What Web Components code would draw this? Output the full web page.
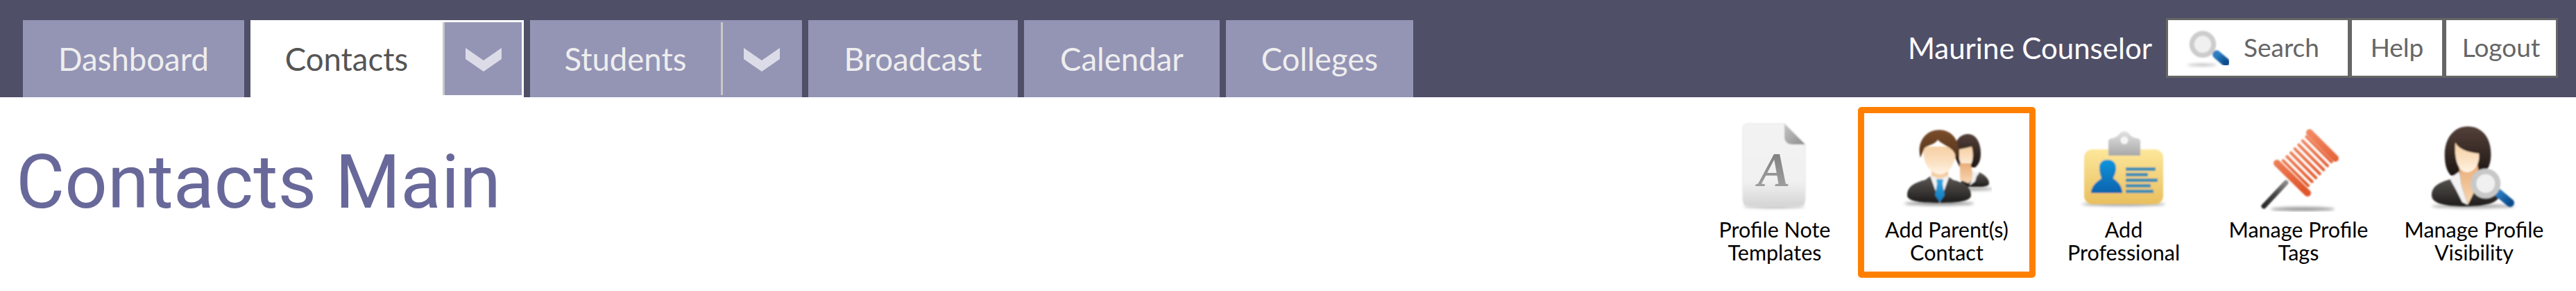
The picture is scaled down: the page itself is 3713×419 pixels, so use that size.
<!DOCTYPE html>
<html>
<head>
<meta charset="utf-8">
<title>Contacts Main</title>
<style>
  html, body { margin: 0; padding: 0; background: #fff; }
  body { font-family: "Lato", "Liberation Sans", sans-serif; }
</style>
</head>
<body>
<app-shell>
  <app-header slot="header">
    <nav-tab slot="tabs" style="--w:319px">Dashboard</nav-tab>
    <nav-tab slot="tabs" style="--w:277px" active menu>Contacts</nav-tab>
    <nav-tab slot="tabs" style="--w:275px" menu>Students</nav-tab>
    <nav-tab slot="tabs" style="--w:302px">Broadcast</nav-tab>
    <nav-tab slot="tabs" style="--w:282px">Calendar</nav-tab>
    <nav-tab slot="tabs" style="--w:270px">Colleges</nav-tab>
    <span slot="user">Maurine Counselor</span>
    <tool-button slot="tools" style="--w:265px" wide><app-icon slot="icon" name="search" size="65"></app-icon>Search</tool-button>
    <tool-button slot="tools" style="--w:136px">Help</tool-button>
    <tool-button slot="tools" style="--w:164px">Logout</tool-button>
  </app-header>
  <page-title slot="title">Contacts Main</page-title>
  <action-link slot="actions" style="--w:240px"><app-icon slot="icon" name="note"></app-icon>Profile Note<br>Templates</action-link>
  <action-link slot="actions" active style="--w:256px"><app-icon slot="icon" name="parents"></app-icon>Add Parent(s)<br>Contact</action-link>
  <action-link slot="actions" style="--w:254px"><app-icon slot="icon" name="badge"></app-icon>Add<br>Professional</action-link>
  <action-link slot="actions" style="--w:250px"><app-icon slot="icon" name="pin"></app-icon>Manage Profile<br>Tags</action-link>
  <action-link slot="actions" style="--w:256px"><app-icon slot="icon" name="visibility"></app-icon>Manage Profile<br>Visibility</action-link>
</app-shell>

<script>
// Page frame
class AppShell extends HTMLElement {
  constructor() {
    super();
    this.attachShadow({ mode: 'open' });
    this.shadowRoot.innerHTML = `
      <style>
        :host { display: block; }
        .main {
          display: flex;
          justify-content: space-between;
          align-items: flex-start;
          padding: 14px 19px 0 0;
        }
        .actions { display: flex; }
      </style>
      <slot name="header"></slot>
      <div class="main">
        <slot name="title"></slot>
        <div class="actions"><slot name="actions"></slot></div>
      </div>
    `;
  }
}

class AppHeader extends HTMLElement {
  constructor() {
    super();
    this.attachShadow({ mode: 'open' });
    this.shadowRoot.innerHTML = `
      <style>
        :host {
          display: flex;
          justify-content: space-between;
          height: 140px;
          background: #4f4f68;
          padding: 0 26px 0 33px;
          box-sizing: border-box;
        }
        .tabs { display: flex; gap: 9px; padding-top: 29px; }
        .right { display: flex; align-items: flex-start; padding-top: 26px; }
        .user {
          color: #fff;
          font-size: 42px;
          line-height: 86px;
          margin-right: 20px;
        }
        .tools { display: flex; }
      </style>
      <div class="tabs"><slot name="tabs"></slot></div>
      <div class="right">
        <div class="user"><slot name="user"></slot></div>
        <div class="tools"><slot name="tools"></slot></div>
      </div>
    `;
  }
}

// Top nav tab, with optional dropdown part
class NavTab extends HTMLElement {
  constructor() {
    super();
    this.attachShadow({ mode: 'open' });
  }

  connectedCallback() {
    this.shadowRoot.innerHTML = `
      <style>
        :host {
          display: flex;
          height: 111px;
          background: #9494b5;
          color: #eeeeee;
          font-size: 45.5px;
        }
        :host([active]) { background: #fff; color: #555; }
        .label {
          display: flex;
          align-items: center;
          justify-content: center;
          width: var(--w);
          padding-bottom: 1px;
        }
        .menu {
          display: flex;
          align-items: center;
          justify-content: center;
          width: 111px;
          height: 105px;
          margin: 3px 3px 3px 0;
          background: #9494b5;
          border-left: 3px solid #c8c8c8;
        }
        svg { display: block; filter: blur(0.7px); margin-top: 1px; }
      </style>
      <div class="label"><slot></slot></div>
      ${this.hasAttribute('menu') ? `
        <div class="menu">
          <svg width="52" height="35" viewBox="0 0 52 35">
            <path d="M0 1 L26 19 L52 1 L52 17 L26 35 L0 17 Z" fill="#dcdce8"/>
          </svg>
        </div>` : ''}
    `;
  }
}

class ToolButton extends HTMLElement {
  constructor() {
    super();
    this.attachShadow({ mode: 'open' });
    this.shadowRoot.innerHTML = `
      <style>
        :host {
          display: flex;
          align-items: center;
          justify-content: center;
          width: var(--w);
          height: 86px;
          box-sizing: border-box;
          border: 3px solid #666;
          background: #fff;
          color: #666;
          font-size: 37px;
          padding-bottom: 4px;
        }
        :host([wide]) { justify-content: flex-start; padding-left: 25px; }
        ::slotted(app-icon) { margin-right: 19px; }
      </style>
      <slot name="icon"></slot>
      <slot></slot>
    `;
  }
}

class PageTitle extends HTMLElement {
  constructor() {
    super();
    this.attachShadow({ mode: 'open' });
    this.shadowRoot.innerHTML = `
      <style>
        :host {
          display: block;
          color: #68689a;
          font-family: "Roboto", "Liberation Sans", sans-serif;
          font-weight: 400;
          font-size: 108px;
          line-height: 130px;
          padding: 43px 0 0 23px;
        }
      </style>
      <slot></slot>
    `;
  }
}

class ActionLink extends HTMLElement {
  constructor() {
    super();
    this.attachShadow({ mode: 'open' });
    this.shadowRoot.innerHTML = `
      <style>
        :host {
          display: block;
          width: var(--w, 252px);
          height: 246px;
          box-sizing: border-box;
          border: 9px solid transparent;
          border-radius: 5px;
          color: #000;
          font-size: 30.5px;
          line-height: 33px;
          text-align: center;
        }
        :host([active]) { border-color: #ff8000; }
        .icon { display: flex; justify-content: center; padding: 12px 0 9px; }
        .text { margin: 0 -9px; }
      </style>
      <div class="icon"><slot name="icon"></slot></div>
      <div class="text"><slot></slot></div>
    `;
  }
}

// Hand drawn icons, blurred a little since the originals are scaled rasters
const ICON_DEFS = `
  <filter id="soft" x="-10%" y="-10%" width="120%" height="120%"><feGaussianBlur stdDeviation="0.8"/></filter>
  <filter id="shade" x="-20%" y="-200%" width="140%" height="500%"><feGaussianBlur stdDeviation="2"/></filter>
  <linearGradient id="paper" x1="0" y1="0" x2="0" y2="1">
    <stop offset="0" stop-color="#f3f3f3"/><stop offset=".7" stop-color="#f1f1f1"/><stop offset="1" stop-color="#d4d4d4"/>
  </linearGradient>
  <linearGradient id="fold" x1="0" y1="0" x2="1" y2="1">
    <stop offset="0" stop-color="#c6c6c6"/><stop offset="1" stop-color="#8d8d8d"/>
  </linearGradient>
  <linearGradient id="letter" x1="0" y1="0" x2="0" y2="1">
    <stop offset="0" stop-color="#777"/><stop offset="1" stop-color="#a8a8a8"/>
  </linearGradient>
  <linearGradient id="skin" x1="0" y1="0" x2="0" y2="1">
    <stop offset="0" stop-color="#f6cfa4"/><stop offset=".6" stop-color="#fbe2c4"/><stop offset="1" stop-color="#fff4e6"/>
  </linearGradient>
  <linearGradient id="neck" x1="0" y1="0" x2="0" y2="1">
    <stop offset="0" stop-color="#e9ad78"/><stop offset="1" stop-color="#f8d8b4"/>
  </linearGradient>
  <linearGradient id="hair" x1="0" y1="0" x2="0" y2="1">
    <stop offset="0" stop-color="#7a4d2b"/><stop offset="1" stop-color="#54321a"/>
  </linearGradient>
  <linearGradient id="darkhair" x1="0" y1="0" x2="0" y2="1">
    <stop offset="0" stop-color="#54403a"/><stop offset="1" stop-color="#1d1613"/>
  </linearGradient>
  <linearGradient id="suit" x1="0" y1="0" x2="0" y2="1">
    <stop offset="0" stop-color="#5e5a56"/><stop offset="1" stop-color="#1f1d1c"/>
  </linearGradient>
  <linearGradient id="tie" x1="0" y1="0" x2="0" y2="1">
    <stop offset="0" stop-color="#35a8e0"/><stop offset="1" stop-color="#0f78bd"/>
  </linearGradient>
  <linearGradient id="card" x1="0" y1="0" x2="0" y2="1">
    <stop offset="0" stop-color="#fde79b"/><stop offset="1" stop-color="#e9bf5e"/>
  </linearGradient>
  <linearGradient id="clip" x1="0" y1="0" x2="0" y2="1">
    <stop offset="0" stop-color="#e2e2e2"/><stop offset="1" stop-color="#a8a8a8"/>
  </linearGradient>
  <linearGradient id="blue" x1="0" y1="0" x2="0" y2="1">
    <stop offset="0" stop-color="#0f95dc"/><stop offset="1" stop-color="#0a62ad"/>
  </linearGradient>
  <linearGradient id="needle" gradientUnits="userSpaceOnUse" x1="47" y1="88" x2="15" y2="122">
    <stop offset="0" stop-color="#8a8a8a"/><stop offset=".5" stop-color="#444"/><stop offset="1" stop-color="#2a2a2a"/>
  </linearGradient>
  <linearGradient id="handle" x1="0" y1="0" x2="1" y2="1">
    <stop offset="0" stop-color="#2d7fc4"/><stop offset="1" stop-color="#0b4c8c"/>
  </linearGradient>
  <linearGradient id="peg" gradientUnits="userSpaceOnUse" x1="60" y1="30" x2="90" y2="90">
    <stop offset="0" stop-color="#f08660"/><stop offset="1" stop-color="#e0562a"/>
  </linearGradient>
`;

// seven thin rings between the two end caps of the pin
const pinStripes = [1, 2, 3, 4, 5, 6, 7].map(k => {
  const cx = 55.3 + k * 5.6;
  const cy = 80 - k * 5.7;
  return `<path d="M${cx - 18} ${cy - 18} L${cx + 18} ${cy + 18}" stroke-width="4.2"/>`;
}).join('');

const ICONS = {
  note: `
    <ellipse cx="64" cy="122" rx="44" ry="3" fill="#bbb" filter="url(#shade)"/>
    <g filter="url(#soft)">
      <path d="M26 3 H79 L109 33 V113 Q109 122 100 122 H28 Q19 122 19 113 V10 Q19 3 26 3 Z" fill="url(#paper)" stroke="#e4e4e4"/>
      <path d="M79 3 L109 33 H91 Q79 33 79 21 Z" fill="url(#fold)"/>
    </g>
    <text x="64" y="93" aria-hidden="true" text-anchor="middle" font-family="Liberation Serif" font-style="italic" font-weight="700" font-size="70" fill="url(#letter)">A</text>
  `,
  parents: `
    <ellipse cx="54" cy="118" rx="50" ry="3" fill="#999" filter="url(#shade)"/>
    <ellipse cx="104" cy="97" rx="28" ry="2.5" fill="#aaa" filter="url(#shade)"/>
    <g filter="url(#soft)">
      <path d="M76 50 C74 28 84 18 96 18 C108 18 114 32 114 46 C114 56 111 62 106 66 L84 66 Z" fill="url(#darkhair)"/>
      <path d="M84 92 L88 80 L104 78 L112 73 Q126 80 126 89 Q126 94 112 94 H92 Z" fill="url(#suit)"/>
      <path d="M83 40 Q94 38 101 36 Q104 46 102 56 Q100 65 93 66 Q85 64 83 54 Z" fill="url(#skin)"/>
      <path d="M84 60 H99 L104 80 L97 89 L84 84 Z" fill="url(#neck)"/>
      <path d="M102 72 L112 74 L108 79 L106 86 L98 92 L102 80 Z" fill="#f1f1f1"/>
      <path d="M8 106 C8 94 18 88 34 84 L42 78 H66 L74 84 C90 88 100 94 100 106 C100 114 86 117 54 117 C22 117 8 114 8 106 Z" fill="url(#suit)"/>
      <path d="M41 78 H69 L55 117 Z" fill="#f2f2f2"/>
      <path d="M50 83 H60 L59 90 L62 106 L55 116 L48 106 L51 90 Z" fill="url(#tie)"/>
      <path d="M43 62 H67 V78 L55 83 L43 78 Z" fill="url(#neck)"/>
      <path d="M31 36 H78 C80 60 68 76 55 76 C42 76 30 62 31 36 Z" fill="url(#skin)"/>
      <path d="M27 52 C21 28 36 12 54 12 C72 12 84 26 82 48 L78 54 C78 46 74 40 66 36 C60 32 55 30 52 26 C50 32 38 34 33 38 Z" fill="url(#hair)"/>
    </g>
  `,
  badge: `
    <ellipse cx="65" cy="119" rx="60" ry="3" fill="#aaa" filter="url(#shade)"/>
    <g filter="url(#soft)">
      <rect x="8" y="40" width="114" height="79" rx="12" fill="url(#card)"/>
      <path d="M43 49 V28 Q43 25 48 24 Q54 23 57 20 Q61 14 66 14 Q71 14 75 20 Q78 23 84 24 Q89 25 89 28 V49 Z" fill="url(#clip)"/>
      <circle cx="66" cy="27" r="5.5" fill="#f6f6f6"/>
      <path d="M30 66 C30 58 36 55 42 55 C48 55 54 58 54 67 C54 74 51 78 50 82 C58 87 63 94 63 103 H18 C18 94 25 87 33 82 C32 78 30 74 30 66 Z" fill="url(#blue)"/>
      <g fill="#3d8fb4">
        <rect x="68" y="66" width="43" height="5"/>
        <rect x="68" y="74" width="32" height="5"/>
        <rect x="68" y="82" width="46" height="5"/>
        <rect x="68" y="90" width="36" height="5"/>
        <rect x="68" y="98" width="40" height="5"/>
      </g>
    </g>
  `,
  pin: `
    <ellipse cx="71" cy="126" rx="46" ry="3" fill="#999" filter="url(#shade)"/>
    <g filter="url(#soft)">
      <path d="M47 88 L15 122" stroke="url(#needle)" stroke-width="7" stroke-linecap="round" fill="none"/>
      <g stroke="url(#peg)" stroke-linecap="round" fill="none">
        <path d="M34 60 L78 103" stroke-width="10"/>
        <path d="M81 16 L118 53" stroke-width="10"/>
        ${pinStripes}
      </g>
    </g>
  `,
  visibility: `
    <ellipse cx="64" cy="122" rx="60" ry="3" fill="#aaa" filter="url(#shade)"/>
    <g filter="url(#soft)">
      <path d="M24 62 C18 28 34 7 56 7 C78 7 92 26 89 54 C88 64 84 70 78 76 L32 78 Q26 72 24 62 Z" fill="url(#darkhair)"/>
      <path d="M4 106 C4 94 14 88 28 84 L46 76 H66 L86 84 C94 90 101 98 101 106 C101 118 80 122 52 122 C22 122 4 118 4 106 Z" fill="url(#suit)"/>
      <path d="M30 82 L44 72 L47 92 L56 120 L48 116 L40 100 Z" fill="#f3f3f3"/>
      <path d="M43 62 H70 L74 84 L56 120 L47 92 Z" fill="url(#neck)"/>
      <path d="M38 30 C42 38 52 44 72 46 C74 60 66 73 55 73 C44 73 36 58 38 30 Z" fill="url(#skin)"/>
      <path d="M99 102 L117 117" stroke="url(#handle)" stroke-width="12" stroke-linecap="round" fill="none"/>
      <circle cx="81.7" cy="89.3" r="17.5" fill="#f0f0f0" stroke="#c8c8c8" stroke-width="8"/>
    </g>
  `,
  search: `
    <ellipse cx="24" cy="58.5" rx="21" ry="1.5" fill="#aaa" filter="url(#shade)"/>
    <g filter="url(#soft)">
      <path d="M45 43.5 L58 54.5" stroke="url(#handle)" stroke-width="12" stroke-linecap="round" fill="none"/>
      <circle cx="25" cy="28.8" r="15.7" fill="#f0f0f0" stroke="#cccccc" stroke-width="7"/>
    </g>
  `
};

class AppIcon extends HTMLElement {
  constructor() {
    super();
    this.attachShadow({ mode: 'open' });
  }

  connectedCallback() {
    const size = this.getAttribute('size') || 130;
    this.shadowRoot.innerHTML = `
      <style>
        :host { display: block; width: ${size}px; height: ${size}px; }
        svg { display: block; }
      </style>
      <svg width="${size}" height="${size}" viewBox="0 0 ${size} ${size}">
        <defs>${ICON_DEFS}</defs>
        ${ICONS[this.getAttribute('name')]}
      </svg>
    `;
  }
}

customElements.define('app-shell', AppShell);
customElements.define('app-header', AppHeader);
customElements.define('nav-tab', NavTab);
customElements.define('tool-button', ToolButton);
customElements.define('page-title', PageTitle);
customElements.define('action-link', ActionLink);
customElements.define('app-icon', AppIcon);
</script>
</body>
</html>
